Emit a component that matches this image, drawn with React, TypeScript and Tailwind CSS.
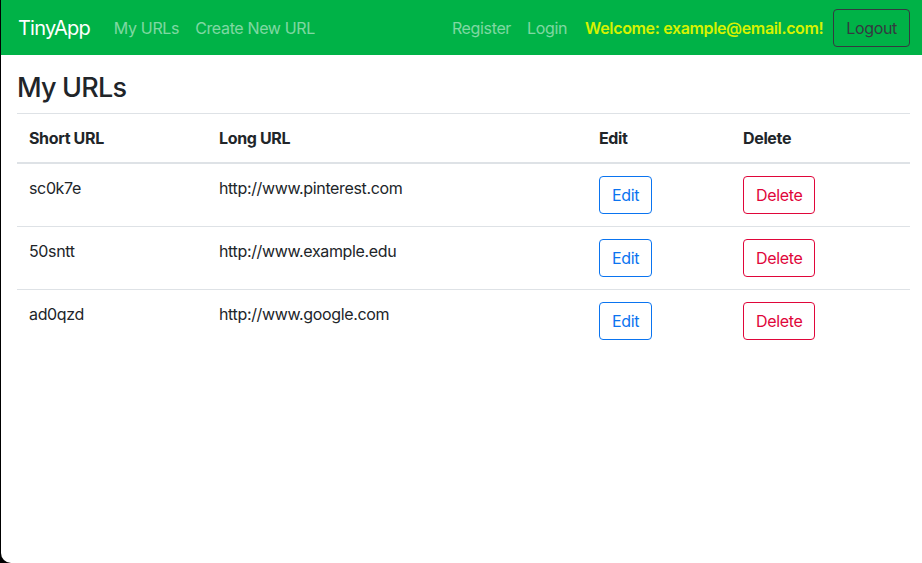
const urls = [
  { id: "sc0k7e", longURL: "http://www.pinterest.com" },
  { id: "50sntt", longURL: "http://www.example.edu" },
  { id: "ad0qzd", longURL: "http://www.google.com" },
];

export default function App() {
  return (
    <div className="h-[563px] bg-black" style={{ fontFamily: "Inter, 'Noto Sans', sans-serif" }}>
      <div className="ml-px h-full bg-white rounded-bl-[10px] overflow-hidden text-[#212529] tracking-[-0.022em]">
        <nav className="h-[55px] bg-[#00b247] flex items-center pl-[17px] pr-3">
          <span className="text-[20px] text-white mr-[16px] tracking-[-0.04em]">TinyApp</span>
          <a className="px-2 text-white/50">My URLs</a>
          <a className="px-2 text-white/50">Create New URL</a>
          <div className="ml-auto flex items-center">
            <a className="px-2 text-white/50">Register</a>
            <a className="px-2 text-white/50">Login</a>
            <span className="ml-[10px] font-semibold text-[#d6f200]">Welcome: example@email.com!</span>
            <button className="ml-[10px] h-[38px] px-3 border border-[#343a40] rounded text-[#343a40]">
              Logout
            </button>
          </div>
        </nav>
        <main className="pl-4 pr-3 pt-4">
          <h2 className="text-[27px] leading-[34px] font-medium mb-2 tracking-[-0.03em]">My URLs</h2>
          <table className="w-full table-fixed border-collapse">
            <colgroup>
              <col className="w-[190px]" />
              <col className="w-[380px]" />
              <col className="w-[144px]" />
              <col />
            </colgroup>
            <thead>
              <tr className="border-t border-[#dee2e6] border-b-2">
                <th className="text-left font-bold p-3">Short URL</th>
                <th className="text-left font-bold p-3">Long URL</th>
                <th className="text-left font-bold p-3">Edit</th>
                <th className="text-left font-bold p-3">Delete</th>
              </tr>
            </thead>
            <tbody>
              {urls.map((u, i) => (
                <tr key={u.id} className={i < urls.length - 1 ? "border-b border-[#dee2e6]" : ""}>
                  <td className="p-3 align-top">{u.id}</td>
                  <td className="p-3 align-top">{u.longURL}</td>
                  <td className="p-3 align-top">
                    <button className="h-[38px] px-3 border border-[#0a74f0] text-[#0a74f0] rounded">Edit</button>
                  </td>
                  <td className="p-3 align-top">
                    <button className="h-[38px] px-3 border border-[#e0063a] text-[#e0063a] rounded">Delete</button>
                  </td>
                </tr>
              ))}
            </tbody>
          </table>
        </main>
      </div>
    </div>
  );
}
